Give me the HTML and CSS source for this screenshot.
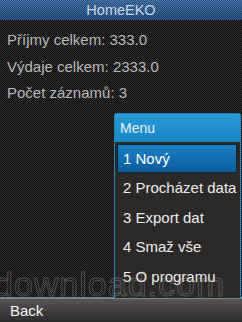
FILE: index.html
```html
<!DOCTYPE html>
<html lang="cs">
<head>
  <meta charset="UTF-8">
  <title>HomeEKO</title>
  <link rel="stylesheet" href="styles.css">
</head>
<body>
  <div class="screen">
    <div class="titlebar">HomeEKO</div>

    <div class="content">
      <div class="stat">Příjmy celkem: 333.0</div>
      <div class="stat">Výdaje celkem: 2333.0</div>
      <div class="stat">Počet záznamů: 3</div>

      <div class="menu">
        <div class="menu-title">Menu</div>
        <ul class="menu-list">
          <li class="selected">1 Nový</li>
          <li>2 Procházet data</li>
          <li>3 Export dat</li>
          <li>4 Smaž vše</li>
          <li>5 O programu</li>
        </ul>
      </div>

      <div class="watermark" aria-hidden="true">download.com</div>
    </div>

    <div class="softkeys">
      <span>Back</span>
    </div>
  </div>
</body>
</html>
```

FILE: styles.css
```css
body {
  margin: 0;
  background: #000;
  font-family: "Liberation Sans", Arial, sans-serif;
}
.screen {
  width: 242px;
  height: 322px;
  display: flex;
  flex-direction: column;
  overflow: hidden;
  background: repeating-conic-gradient(#333 0 25%, #0a0a0a 0 50%) 0 0 / 2px 2px;
}
.titlebar {
  height: 20px;
  line-height: 21px;
  text-align: center;
  font-size: 14.5px;
  color: #c9d6e8;
  background:
    repeating-conic-gradient(rgba(0, 0, 0, 0.45) 0 25%, rgba(0, 0, 0, 0) 0 50%) 0 0 / 2px 2px,
    linear-gradient(#4f86c8, #2f5f98);
}
.content {
  flex: 1;
  position: relative;
  padding: 7px 0 0 7px;
}
.stat {
  height: 26.5px;
  line-height: 26px;
  font-size: 15px;
  color: #b8b8b8;
}
.menu {
  position: absolute;
  left: 114px;
  right: 1px;
  top: 93px;
  bottom: -1px;
  background: #2b2a28;
  border: 1px solid #1f86b4;
  border-bottom: none;
  border-radius: 3px 3px 0 0;
}
.menu-title {
  height: 28px;
  line-height: 28px;
  padding-left: 5px;
  font-size: 14px;
  color: #e4f2fb;
  background: linear-gradient(#2a9ad6, #1886c6);
}
.menu-list {
  list-style: none;
  margin: 0;
  padding: 2px 0 0;
}
.menu-list li {
  height: 29.5px;
  line-height: 29px;
  padding-left: 8px;
  font-size: 15px;
  color: #ececec;
}
.menu-list li.selected {
  margin: 0 3px 0 2px;
  padding-left: 5px;
  height: 27px;
  line-height: 27px;
  border: 1px solid #10242f;
  background: linear-gradient(#1b82c6, #0c5c9c);
  color: #fff;
}
.watermark {
  position: absolute;
  left: -6px;
  bottom: -7px;
  font-size: 34px;
  letter-spacing: 1px;
  color: transparent;
  -webkit-text-stroke: 1px rgba(200, 200, 200, 0.3);
  pointer-events: none;
}
.softkeys {
  height: 23px;
  line-height: 23px;
  padding-left: 10px;
  font-size: 15px;
  color: #f4f4f4;
  border-top: 2px solid #6f8590;
  background: linear-gradient(#5a5456, #2b2a2b);
}
```
